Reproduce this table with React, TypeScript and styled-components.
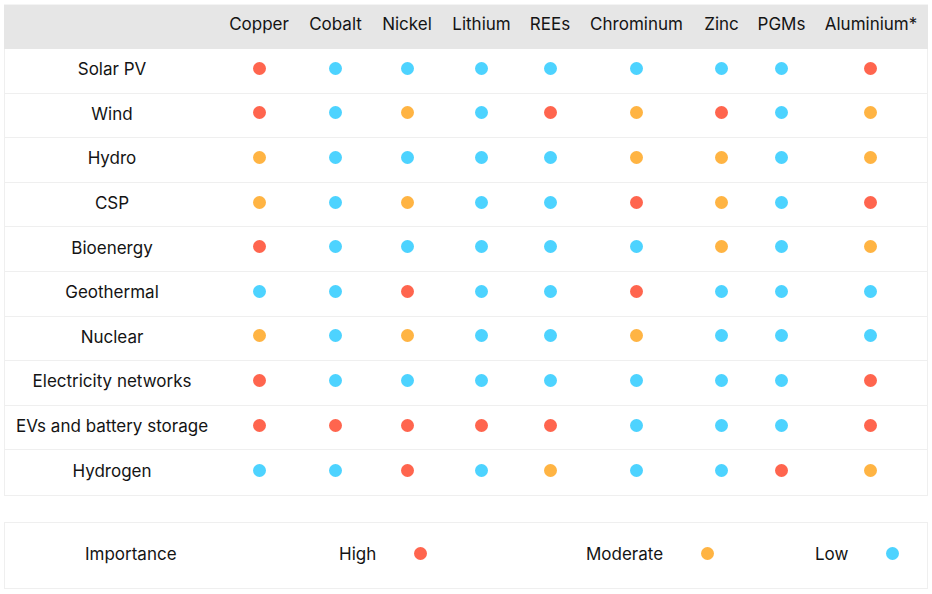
import React from "react";
import styled, { createGlobalStyle } from "styled-components";

const GlobalStyle = createGlobalStyle`
  html, body { margin: 0; padding: 0; background: #ffffff; }
  body { font-family: Inter, "Noto Sans", "Liberation Sans", sans-serif; color: #141414; }
`;

type Level = "H" | "M" | "L";

const COLORS: Record<Level, string> = {
  H: "#ff654e",
  M: "#ffb443",
  L: "#4dd3ff",
};

const COLUMNS = "214px 80px 73px 70px 79px 58px 115px 55px 65px 1fr";

const metals = ["Copper", "Cobalt", "Nickel", "Lithium", "REEs", "Chrominum", "Zinc", "PGMs", "Aluminium*"];

const rows: { name: string; v: string }[] = [
  { name: "Solar PV", v: "HLLLLLLLH" },
  { name: "Wind", v: "HLMLHMHLM" },
  { name: "Hydro", v: "MLLLLMMLM" },
  { name: "CSP", v: "MLMLLHMLH" },
  { name: "Bioenergy", v: "HLLLLLMLM" },
  { name: "Geothermal", v: "LLHLLHLLL" },
  { name: "Nuclear", v: "MLMLLMLLL" },
  { name: "Electricity networks", v: "HLLLLLLLH" },
  { name: "EVs and battery storage", v: "HHHHHLLLH" },
  { name: "Hydrogen", v: "LLHLMLLHM" },
];

const Page = styled.div`
  padding: 4px 4px 0 4px;
  width: 924px;
`;

const Table = styled.div`
  border: 1px solid #efefef;
  border-top: none;
  box-sizing: border-box;
`;

const HeaderRow = styled.div`
  display: grid;
  grid-template-columns: ${COLUMNS};
  height: 45px;
  background: #e6e6e6;
  align-items: center;
  margin: 0 -1px;
  padding-left: 1px;
  border-top: 1px solid #f4f4f4;
  box-sizing: border-box;
  padding-bottom: 6px;
`;

const HeaderCell = styled.div`
  text-align: center;
  font-size: 17px;
  line-height: 20px;
  color: #141414;
  white-space: nowrap;
`;

const Row = styled.div<{ $last?: boolean }>`
  display: grid;
  grid-template-columns: ${COLUMNS};
  height: 44.6px;
  align-items: center;
  box-sizing: border-box;
  border-bottom: ${(p) => (p.$last ? "none" : "1px solid #efefef")};
  padding-bottom: 5px;
`;

const RowLabel = styled.div`
  text-align: center;
  font-size: 17px;
  line-height: 20px;
  color: #141414;
  white-space: nowrap;
  margin-top: 2px;
`;

const Cell = styled.div`
  display: flex;
  justify-content: center;
  align-items: center;
`;

const Dot = styled.span<{ $color: string }>`
  display: block;
  width: 13px;
  height: 13px;
  border-radius: 50%;
  background: ${(p) => p.$color};
`;

const Legend = styled.div`
  margin-top: 26px;
  height: 67px;
  border: 1px solid #efefef;
  box-sizing: border-box;
  display: grid;
  grid-template-columns: 254px 247px 229px 1fr;
  align-items: center;
  padding: 0 0 3px 80px;
`;

const LegendLabel = styled.span`
  font-size: 17px;
  line-height: 20px;
  color: #141414;
`;

const LegendGroup = styled.div`
  display: flex;
  align-items: center;
  gap: 38px;
`;

export default function App() {
  return (
    <Page>
      <GlobalStyle />
      <Table>
        <HeaderRow>
          <HeaderCell />
          {metals.map((m) => (
            <HeaderCell key={m}>{m}</HeaderCell>
          ))}
        </HeaderRow>
        {rows.map((r, i) => (
          <Row key={r.name} $last={i === rows.length - 1}>
            <RowLabel>{r.name}</RowLabel>
            {r.v.split("").map((lv, j) => (
              <Cell key={j}>
                <Dot $color={COLORS[lv as Level]} />
              </Cell>
            ))}
          </Row>
        ))}
      </Table>
      <Legend>
        <LegendLabel>Importance</LegendLabel>
        <LegendGroup>
          <LegendLabel>High</LegendLabel>
          <Dot $color={COLORS.H} />
        </LegendGroup>
        <LegendGroup>
          <LegendLabel>Moderate</LegendLabel>
          <Dot $color={COLORS.M} />
        </LegendGroup>
        <LegendGroup>
          <LegendLabel>Low</LegendLabel>
          <Dot $color={COLORS.L} />
        </LegendGroup>
      </Legend>
    </Page>
  );
}
